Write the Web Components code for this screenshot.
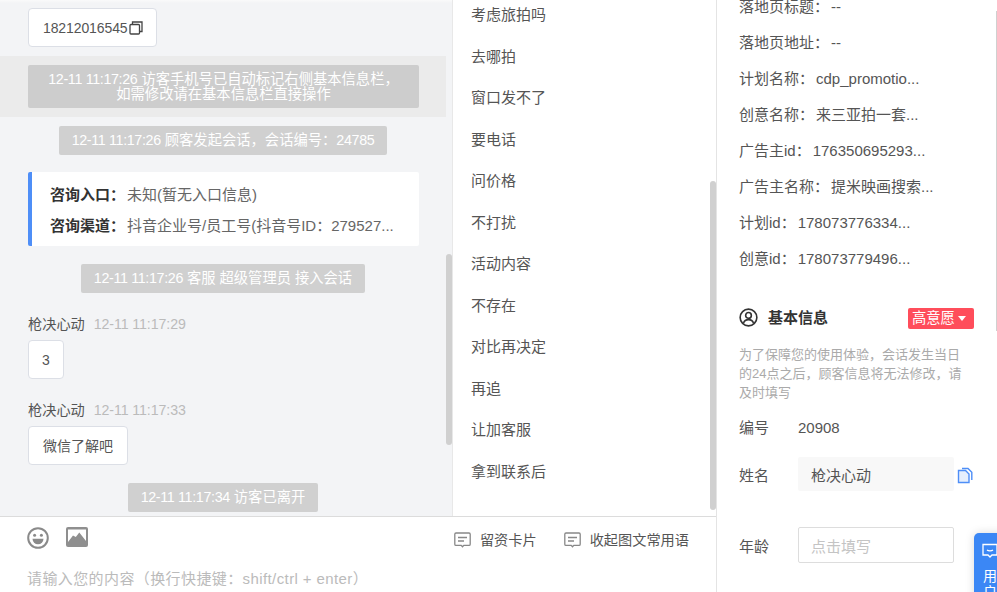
<!doctype html>
<html lang="zh">
<head>
<meta charset="utf-8">
<title>会话</title>
<style>
  html, body { margin: 0; height: 100%; overflow: hidden; }
  body { font: 14px/20px "Liberation Sans", "Noto Sans CJK SC", sans-serif; color: #555; background: #fff; }
  chat-app { height: 592px; }
  chat-notice time { letter-spacing: -.35px; }
</style>
</head>
<body>

<chat-app>
  <chat-log slot="log">
    <chat-bubble first><span style="letter-spacing:-.1px">18212016545</span><svg width="14" height="14" viewBox="0 0 14 14" fill="none" stroke="#444" stroke-width="1.3" style="margin:1px -1px 0 1px"><rect x="1" y="3.5" width="9.5" height="9.5" rx="1"/><path d="M3.5 3.5V1h9.5v9.5h-2.500"/></svg></chat-bubble>
    <chat-notice band><time>12-11 11:17:26</time> 访客手机号已自动标记右侧基本信息栏，<br>如需修改请在基本信息栏直接操作</chat-notice>
    <chat-notice style="margin-top:9px"><time>12-11 11:17:26</time> 顾客发起会话，会话编号：<time>24785</time></chat-notice>
    <entry-card></entry-card>
    <chat-notice><time>12-11 11:17:26</time> 客服 超级管理员 接入会话</chat-notice>
    <chat-meta style="margin-top:21px" name="枪决心动" time="12-11 11:17:29"></chat-meta>
    <chat-bubble style="padding:0 13px">3</chat-bubble>
    <chat-meta style="margin-top:21px" name="枪决心动" time="12-11 11:17:33"></chat-meta>
    <chat-bubble>微信了解吧</chat-bubble>
    <chat-notice><time>12-11 11:17:34</time> 访客已离开</chat-notice>
  </chat-log>
  <phrase-list slot="phrases"></phrase-list>
  <reply-box slot="reply"></reply-box>
  <info-panel slot="info"></info-panel>
</chat-app>

<script>
// main frame: chat + phrases on top, reply under them, info on the right
class ChatApp extends HTMLElement {
  constructor() {
    super();
    this.attachShadow({ mode: 'open' });
    this.shadowRoot.innerHTML = `
      <style>
        :host { display: grid; grid-template-columns: 717px 280px; overflow: hidden; }
        .main { display: grid; grid-template-columns: 453px 263px; grid-template-rows: 516px 76px; border-right: 1px solid #e4e4e4; min-width: 0; }
        .reply { grid-column: 1 / 3; }
      </style>
      <div class="main">
        <slot name="log"></slot>
        <slot name="phrases"></slot>
        <div class="reply"><slot name="reply"></slot></div>
      </div>
      <slot name="info"></slot>
    `;
  }
}

class ChatLog extends HTMLElement {
  constructor() {
    super();
    this.attachShadow({ mode: 'open' });
    this.shadowRoot.innerHTML = `
      <style>
        :host { display: block; position: relative; height: 516px; overflow: hidden; background: #f3f4f6; border-right: 1px solid #e8e8e8; box-sizing: border-box; }
        .shade { position: absolute; left: 0; right: 0; top: 0; height: 3px; background: linear-gradient(#fafafa, #f3f4f6); }
        .list { display: flex; flex-direction: column; align-items: flex-start; padding: 8px 0 0 0; width: 446px; }
        .bar { position: absolute; right: 0; top: 254px; width: 6px; height: 191px; border-radius: 3px; background: #d0d0d0; }
      </style>
      <div class="shade"></div>
      <div class="list"><slot></slot></div>
      <div class="bar"></div>
    `;
  }
}

class ChatBubble extends HTMLElement {
  constructor() {
    super();
    this.attachShadow({ mode: 'open' });
    this.shadowRoot.innerHTML = `
      <style>
        :host { display: inline-flex; align-items: center; height: 39px; box-sizing: border-box; margin: 0 0 0 28px; padding: 0 14px; background: #fff; border: 1px solid #dcdfe6; border-radius: 4px; color: #555; }
      </style>
      <slot></slot>
    `;
  }
}

class ChatNotice extends HTMLElement {
  constructor() {
    super();
    this.attachShadow({ mode: 'open' });
    this.shadowRoot.innerHTML = `
      <style>
        :host { display: block; align-self: stretch; text-align: center; margin-top: 18px; font-size: 14.3px; }
        :host([band]) { margin-top: 9px; padding: 9px 27px 9px 28px; background: #ebebeb; }
        .pill { display: inline-block; height: 29px; padding: 5px 13px; box-sizing: border-box; background: #d0d0d0; border-radius: 2px; color: #fff; line-height: 19px; vertical-align: top; }
        :host([band]) .pill { display: block; width: 391px; height: 43px; padding: 7px 13px; line-height: 15px; background: #cdcdcd; }
      </style>
      <span class="pill"><slot></slot></span>
    `;
  }
}

class EntryCard extends HTMLElement {
  constructor() {
    super();
    this.attachShadow({ mode: 'open' });
    this.shadowRoot.innerHTML = `
      <style>
        :host { display: block; box-sizing: border-box; width: 391px; height: 74px; margin: 17px 0 0 28px; padding: 13px 0 0 18px; background: #fff; border-left: 4px solid #4e8ef7; border-radius: 2px; font-size: 15px; }
        div { height: 30.5px; line-height: 20px; color: #666; white-space: nowrap; }
        b { margin-right: 2px; color: #333; font-weight: 700; }
      </style>
      <div><b>咨询入口：</b>未知(暂无入口信息)</div>
      <div><b>咨询渠道：</b>抖音企业号/员工号(抖音号ID：279527...</div>
    `;
  }
}

class ChatMeta extends HTMLElement {
  static get observedAttributes() {
    return ['name', 'time'];
  }

  constructor() {
    super();
    this.attachShadow({ mode: 'open' });
  }

  connectedCallback() {
    this.render();
  }

  attributeChangedCallback() {
    this.render();
  }

  render() {
    this.shadowRoot.innerHTML = `
      <style>
        :host { display: block; height: 20px; margin-left: 28px; margin-bottom: 6px; font-size: 14.2px; white-space: nowrap; }
        span { margin-left: 9px; color: #bbb; letter-spacing: -.1px; }
      </style>
      ${this.getAttribute('name') || ''}<span>${this.getAttribute('time') || ''}</span>
    `;
  }
}

class PhraseList extends HTMLElement {
  constructor() {
    super();
    this.attachShadow({ mode: 'open' });
    const words = ['考虑旅拍吗', '去哪拍', '窗口发不了', '要电话', '问价格', '不打扰', '活动内容', '不存在', '对比再决定', '再追', '让加客服', '拿到联系后'];
    this.shadowRoot.innerHTML = `
      <style>
        :host { display: block; position: relative; height: 516px; overflow: hidden; background: #fff; font-size: 15px; }
        ul { list-style: none; margin: -6px 0 0; padding: 0 0 0 18px; }
        li { height: 41.55px; line-height: 41.55px; color: #555; }
        .bar { position: absolute; right: 0; top: 181px; width: 6px; height: 329px; border-radius: 3px; background: #d0d0d0; }
      </style>
      <ul>${words.map(w => `<li>${w}</li>`).join('')}</ul>
      <div class="bar"></div>
    `;
  }
}

const noteIcon = `<svg width="17" height="16" viewBox="0 0 17 16" fill="none" stroke="#888" stroke-width="1.300"><path d="M2 1h13a1.200 1.200 0 0 1 1.200 1.200v10a1.200 1.200 0 0 1-1.200 1.200H9.800L8.500 14.800 7.200 13.400H2A1.200 1.200 0 0 1 .8 12.200v-10A1.200 1.200 0 0 1 2 1z"/><path d="M4 5.500h9M4 9h6"/></svg>`;

class ReplyBox extends HTMLElement {
  constructor() {
    super();
    this.attachShadow({ mode: 'open' });
    this.shadowRoot.innerHTML = `
      <style>
        :host { display: block; height: 76px; box-sizing: border-box; border-top: 1px solid #dcdcdc; background: #fff; }
        .tools { display: flex; align-items: flex-start; height: 39px; padding: 10px 27px 0; box-sizing: border-box; }
        .emoji { width: 22px; height: 22px; }
        .pic { width: 22px; height: 21px; margin-left: 17px; }
        .act { display: flex; align-items: center; gap: 9px; height: 26px; font-size: 14.2px; }
        .act:first-of-type { margin-left: auto; }
        .act + .act { margin-left: 27px; }
        .hint { padding: 13px 0 0 27px; color: #bbb; font-size: 15px; letter-spacing: .4px; line-height: 20px; white-space: nowrap; }
      </style>
      <div class="tools">
        <svg class="emoji" viewBox="0 0 22 22"><circle cx="11" cy="11" r="9.800" fill="none" stroke="#8a8a8a" stroke-width="2"/><circle cx="7.600" cy="8.200" r="1.500" fill="#8a8a8a"/><circle cx="14.400" cy="8.200" r="1.500" fill="#8a8a8a"/><path d="M5.500 11.800h11a5.500 5.500 0 0 1-11 0z" fill="#8a8a8a"/></svg>
        <svg class="pic" viewBox="0 0 22 21"><rect width="22" height="20" rx="2" fill="#8f8f8f"/><path d="M2 2.500h18v11.500L13.300 5.500 9.800 10 7 8.500 2 15z" fill="#fff"/></svg>
        <div class="act">${noteIcon}<span>留资卡片</span></div>
        <div class="act">${noteIcon}<span>收起图文常用语</span></div>
      </div>
      <div class="hint">请输入您的内容（换行快捷键：shift/ctrl + enter）</div>
    `;
  }
}

class InfoPanel extends HTMLElement {
  constructor() {
    super();
    this.attachShadow({ mode: 'open' });
    const rows = [
      ['落地页标题：', '--'], ['落地页地址：', '--'], ['计划名称：', 'cdp_promotio...'], ['创意名称：', '来三亚拍一套...'],
      ['广告主id：', '176350695293...'], ['广告主名称：', '提米映画搜索...'], ['计划id：', '178073776334...'], ['创意id：', '178073779496...']
    ];
    this.shadowRoot.innerHTML = `
      <style>
        :host { display: block; position: relative; height: 592px; overflow: hidden; background: #fff; font-size: 15px; }
        .rows { margin-top: -11px; padding-left: 22px; }
        .rows div { height: 36px; line-height: 36px; color: #555; white-space: nowrap; }
        .rows span { margin-left: 2px; }
        .head { display: flex; align-items: center; height: 24px; margin: 29px 23px 0 22px; }
        .head svg { width: 19px; height: 19px; margin-top: -2px; }
        .head b { margin-left: 10px; color: #333; font-weight: 700; }
        .tag { margin-left: auto; display: flex; align-items: center; gap: 3px; height: 21px; width: 66px; box-sizing: border-box; padding-left: 4px; background: #ff4d5b; border-radius: 2px; color: #fff; font-size: 14.3px; }
        .tag i { width: 0; height: 0; border: 4px solid transparent; border-top: 5px solid #fff; border-bottom: 0; }
        .note { width: 228px; margin: 15px 0 0 22px; font-size: 13px; line-height: 19px; color: #aaa; }
        .row { display: flex; align-items: center; padding-left: 22px; }
        .row label { width: 59px; color: #555; }
        .no { height: 20px; margin-top: 16px; }
        .field { box-sizing: border-box; width: 156px; padding-left: 13px; border-radius: 2px; }
        .name { margin-top: 19px; }
        .name label, .age label { margin-top: 4px; }
        .name .field { height: 34px; line-height: 37px; background: #f8f8f8; color: #555; }
        .name svg { width: 16px; height: 17px; margin: 3px 0 0 3px; }
        .age { margin-top: 36px; }
        .age .field { height: 36px; padding-left: 12px; line-height: 37px; border: 1px solid #ddd; color: #c4c4c4; }
        .float { position: absolute; left: 257px; top: 533px; width: 40px; height: 70px; background: #3b87f5; border-radius: 5px 0 0 0; box-shadow: 0 0 10px rgba(0,0,0,.15); color: #fff; padding: 10px 0 0 8px; box-sizing: border-box; line-height: 16px; font-size: 14px; }
        .float svg { display: block; width: 16px; height: 16px; margin-bottom: 9px; }
        .float span { display: block; margin-left: 1px; }
        .bar { position: absolute; right: 0; top: 11px; width: 1px; height: 320px; background: #d0d0d0; }
      </style>
      <div class="rows">${rows.map(([k, v]) => `<div>${k}<span>${v}</span></div>`).join('')}</div>
      <div class="head">
        <svg viewBox="0 0 20 20" fill="none" stroke="#333" stroke-width="1.700"><circle cx="10" cy="10" r="8.800"/><circle cx="10" cy="7.800" r="3"/><path d="M4.800 15.800c.8-2.600 2.800-3.600 5.200-3.600s4.400 1 5.200 3.600"/></svg>
        <b>基本信息</b>
        <span class="tag">高意愿<i></i></span>
      </div>
      <div class="note">为了保障您的使用体验，会话发生当日的24点之后，顾客信息将无法修改，请及时填写</div>
      <div class="row no"><label>编号</label><span>20908</span></div>
      <div class="row name"><label>姓名</label><div class="field">枪决心动</div>
        <svg viewBox="0 0 16 17" fill="#e6effd" stroke="#4e8ef7" stroke-width="1.400"><path d="M1.500 3.500h7l3.500 3.500v8.500H1.500z"/><path d="M5 1.500h6l3.800 3.800V13" fill="none"/></svg>
      </div>
      <div class="row age"><label>年龄</label><div class="field">点击填写</div></div>
      <div class="bar"></div>
      <div class="float">
        <svg viewBox="0 0 16 16" fill="none" stroke="#fff" stroke-width="1.300"><path d="M1 1.500h14v10.500h-5l-2 2-2-2H1z"/><path d="M5 7c1.500 1.200 4.500 1.200 6 0"/></svg>
        <span>用</span><span>户</span>
      </div>
    `;
  }
}

customElements.define('chat-app', ChatApp);
customElements.define('chat-log', ChatLog);
customElements.define('chat-bubble', ChatBubble);
customElements.define('chat-notice', ChatNotice);
customElements.define('entry-card', EntryCard);
customElements.define('chat-meta', ChatMeta);
customElements.define('phrase-list', PhraseList);
customElements.define('reply-box', ReplyBox);
customElements.define('info-panel', InfoPanel);
</script>
</body>
</html>
